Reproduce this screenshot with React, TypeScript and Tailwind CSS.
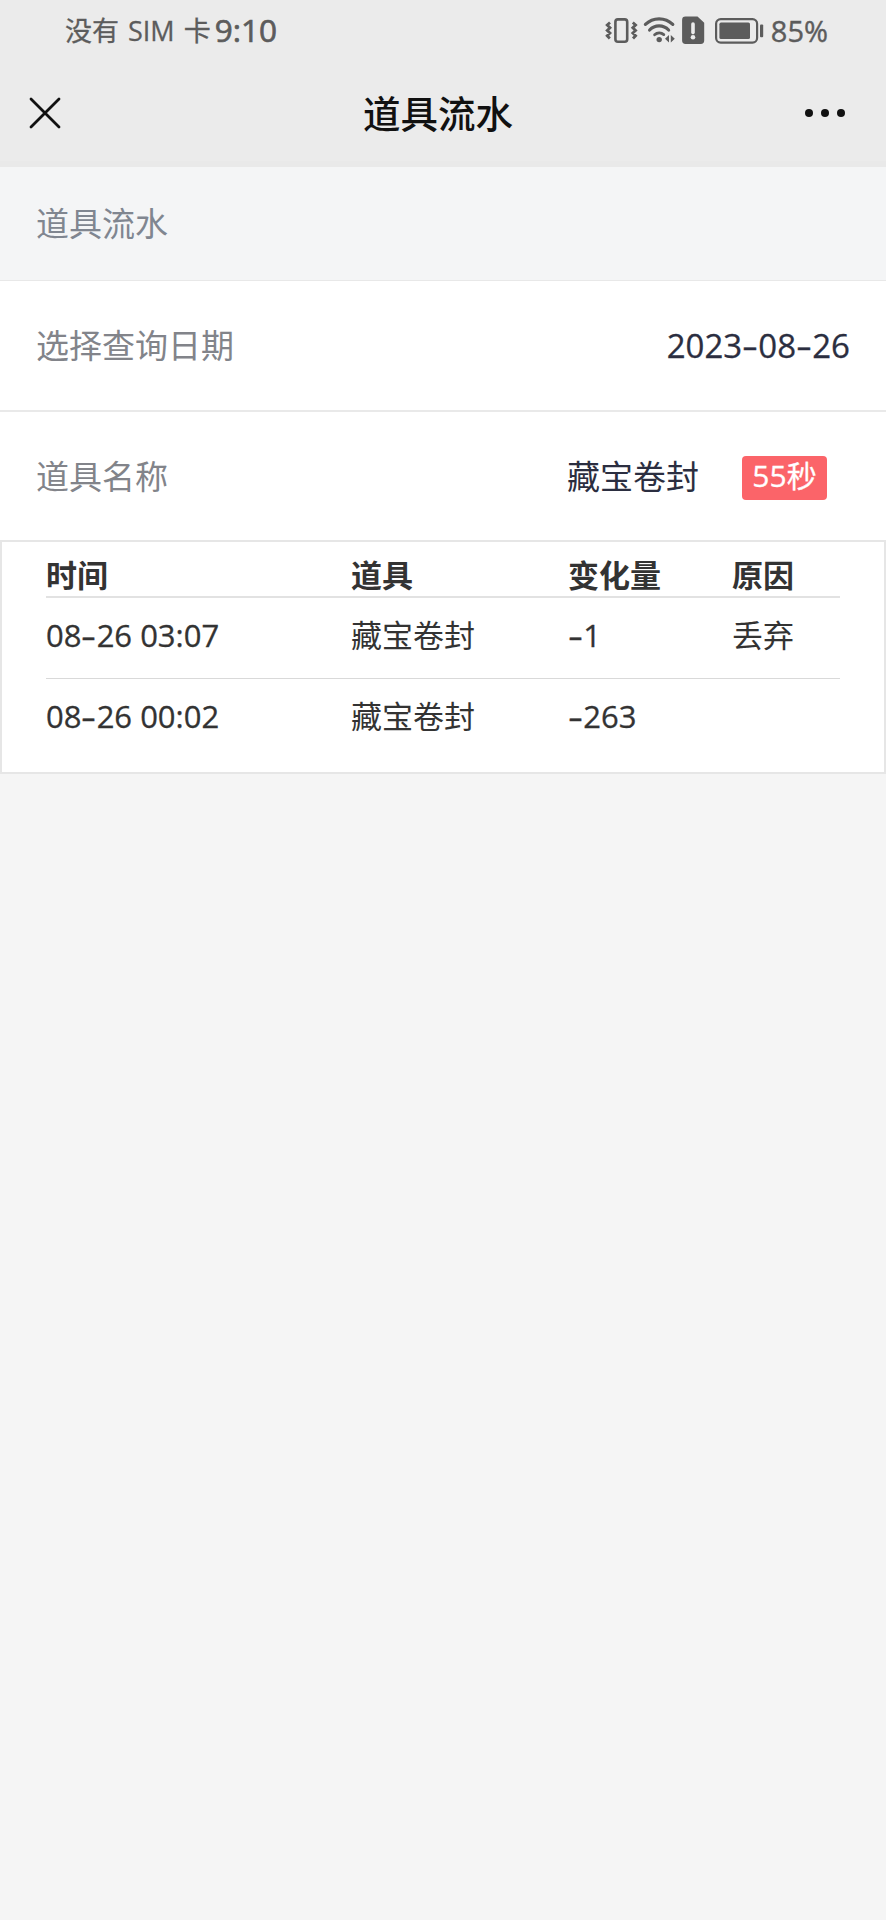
import React from "react";

type Entry = { time: string; item: string; change: string; reason: string };

const entries: Entry[] = [
  { time: "08-26 03:07", item: "藏宝卷封", change: "-1", reason: "丢弃" },
  { time: "08-26 00:02", item: "藏宝卷封", change: "-263", reason: "" },
];

/* Digits with wide hyphens, half an em each. */
function Digits({ value }: { value: string }) {
  return (
    <>
      {value.split(/(-)/).map((part, i) =>
        part === "-" ? (
          <span key={i} className="inline-block w-[0.49em] scale-x-150 text-center">
            -
          </span>
        ) : (
          <span key={i}>{part}</span>
        ),
      )}
    </>
  );
}

function StatusBar() {
  return (
    <div className="flex h-[62px] items-center justify-between pr-[58px] pl-[65px] text-[#5c5c5c]">
      <div className="flex items-center pb-0.5 leading-none">
        <span className="text-[27px] whitespace-pre [word-spacing:2px] [-webkit-text-stroke:0.3px]">没有 SIM 卡</span>
        <span className="ml-1 text-[31.5px] [-webkit-text-stroke:0.7px]">9:10</span>
      </div>
      <div className="flex items-center">
        <svg width="160" height="30" viewBox="604 15 160 30" fill="none" stroke="currentColor">
          <rect x="614.4" y="18.4" width="11.8" height="22.4" rx="2.5" strokeWidth="2.6" />
          <path d="M609 21.5l-2.8 2.5 2.8 2.7-2.8 2.7 2.8 2.7-2.8 2.7 2.6 2.7M631.8 21.5l2.8 2.5-2.8 2.7 2.8 2.7-2.8 2.7 2.8 2.7-2.6 2.7" strokeWidth="2.8" />
          <path d="M644.4 23.4a19.5 19.5 0 0 1 27.4 0M648.6 29a13.2 13.2 0 0 1 19 0" strokeWidth="3.2" strokeLinecap="round" />
          <path d="M653.6 33.8a7 7 0 0 1 9.2 -0.2" strokeWidth="2.8" strokeLinecap="round" />
          <circle cx="658.2" cy="38.6" r="2.7" fill="currentColor" stroke="none" />
          <path d="M668 34v7.4l-4-3.7zM669.8 34v7.4l4-3.7z" fill="currentColor" stroke="none" />
          <path d="M684.5 15.5h12l6.7 6.2v17.8a3.4 3.4 0 0 1-3.4 3.4h-15.3a3.4 3.4 0 0 1-3.4-3.4V18.9a3.4 3.4 0 0 1 3.4-3.4z" fill="currentColor" stroke="none" />
          <path d="M692 23v8.6" stroke="#ebebeb" strokeWidth="3.6" strokeLinecap="round" />
          <circle cx="692" cy="36.3" r="2.3" fill="#ebebeb" stroke="none" />
          <rect x="715.1" y="18.2" width="41" height="23.4" rx="4.6" strokeWidth="2.2" />
          <rect x="718.4" y="21.6" width="30.6" height="16.4" rx="1.6" fill="currentColor" stroke="none" />
          <rect x="759" y="23.6" width="3.2" height="12.6" rx="1" fill="currentColor" stroke="none" />
        </svg>
        <span className="ml-[6px] pb-0.5 text-[29px] leading-none [-webkit-text-stroke:0.4px]">85%</span>
      </div>
    </div>
  );
}

function NavBar() {
  return (
    <div className="flex h-[105px] items-center justify-between border-b-[6px] border-[#e9e9e9] pt-[3px] pr-[40px] pl-7 text-[#111]">
      <svg width="34" height="34" viewBox="0 0 34 34" fill="none" stroke="currentColor" strokeWidth="2.8" strokeLinecap="round">
        <path d="M3 3l28 28M31 3L3 31" />
      </svg>
      <h1 className="pt-0.5 pl-[10px] text-[37.5px] leading-none font-medium">道具流水</h1>
      <svg width="42" height="10" viewBox="0 0 42 10" fill="currentColor">
        <circle cx="5" cy="5" r="4" />
        <circle cx="21" cy="5" r="4" />
        <circle cx="37" cy="5" r="4" />
      </svg>
    </div>
  );
}

export default function App() {
  return (
    <div className="min-h-[1920px] w-[886px] bg-[#f5f5f5] font-['Open_Sans','Noto_Sans_CJK_SC',sans-serif]">
      <header className="bg-[#ebebeb]">
        <StatusBar />
        <NavBar />
      </header>

      <div className="flex h-[114px] items-center border-b border-[#e8e8e8] bg-[#f4f5f6] px-9 text-[33px] leading-none text-[#808690]">
        道具流水
      </div>

      <div className="flex h-[131px] items-center justify-between border-b-2 border-[#e9e9e9] bg-white px-9 text-[33px] leading-none">
        <span className="text-[#82848a]">选择查询日期</span>
        <span className="text-[#2b2e40] [-webkit-text-stroke:0.3px]">
          <Digits value="2023-08-26" />
        </span>
      </div>

      <div className="flex h-[128px] items-center bg-white pr-[59px] pl-9 text-[33px] leading-none">
        <span className="flex-1 text-[#82848a]">道具名称</span>
        <span className="text-[#2b2e40]">藏宝卷封</span>
        <span className="mt-[3px] ml-[43px] flex h-11 w-[85px] items-center justify-center rounded bg-[#fb6469] pb-[3px] text-[30px] text-white [-webkit-text-stroke:0.3px]">
          55秒
        </span>
      </div>

      <div className="h-[234px] border-2 border-[#e6e6e6] bg-white pr-11 pl-11 text-[31px] leading-none text-[#333]">
        <table className="w-[794px] table-fixed border-collapse text-left">
          <colgroup>
            <col className="w-[305px]" />
            <col className="w-[217px]" />
            <col className="w-[164px]" />
            <col className="w-[108px]" />
          </colgroup>
          <thead>
            <tr className="h-[55px] border-b-2 border-[#e2e2e2] align-bottom">
              <th className="pb-[5px] font-bold">时间</th>
              <th className="pb-[5px] font-bold">道具</th>
              <th className="pb-[5px] font-bold">变化量</th>
              <th className="pb-[5px] font-bold">原因</th>
            </tr>
          </thead>
          <tbody>
            {entries.map((entry) => (
              <tr key={entry.time} className="h-[81px] border-b border-[#d9d9d9] last:border-b-0">
                <td className="pb-[5px] [-webkit-text-stroke:0.3px]">
                  <Digits value={entry.time} />
                </td>
                <td className="pb-[5px]">{entry.item}</td>
                <td className="pb-[5px] [-webkit-text-stroke:0.3px]">
                  <Digits value={entry.change} />
                </td>
                <td className="pb-[5px]">{entry.reason}</td>
              </tr>
            ))}
          </tbody>
        </table>
      </div>
    </div>
  );
}
